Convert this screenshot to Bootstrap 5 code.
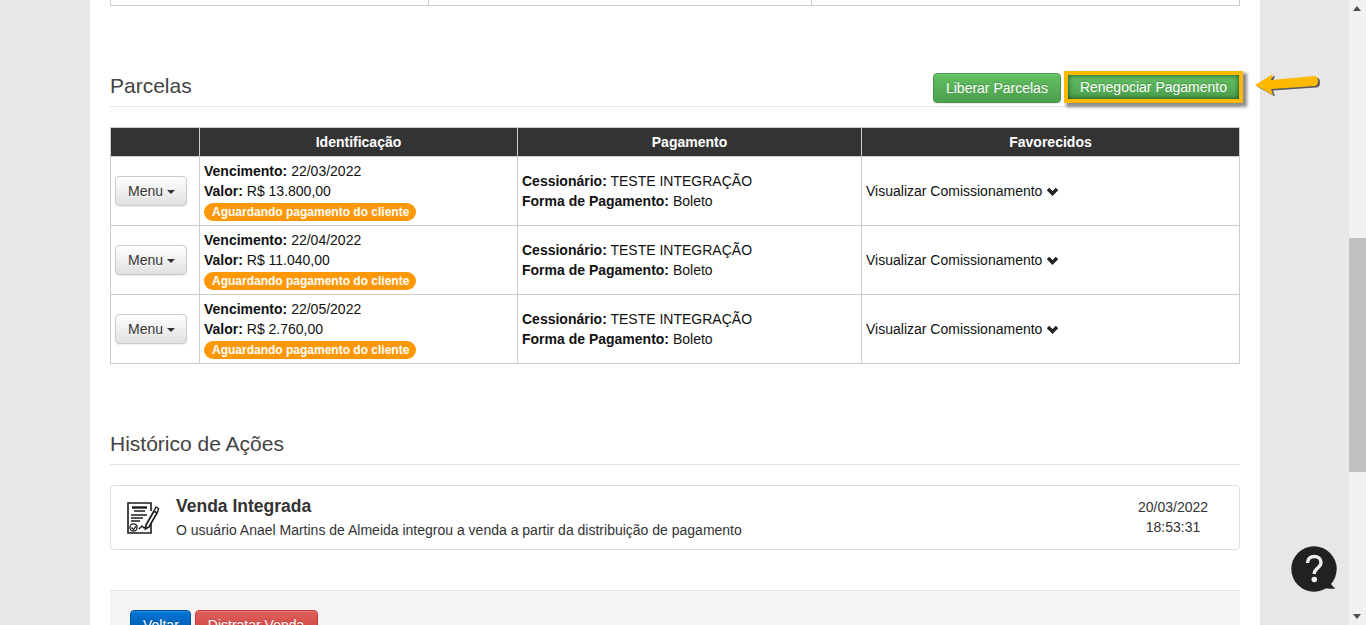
<!DOCTYPE html>
<html lang="pt-BR">
<head>
<meta charset="utf-8">
<title>Venda</title>
<link href="https://cdn.jsdelivr.net/npm/bootstrap@5.3.0/dist/css/bootstrap.min.css" rel="stylesheet">
<style>
html,body{height:625px;overflow:hidden}
body{background:#e8e6e7;font-family:"Liberation Sans",Arial,sans-serif;font-size:14px;color:#333;line-height:20px}
.sheet{width:1170px;margin-left:90px;background:#fff;padding:0 20px;height:625px;overflow:hidden}
.stub{height:6px;display:grid;grid-template-columns:317px 383px 428px;border:1px solid #ccc;border-top:0;width:1130px}
.stub div+div{border-left:1px solid #ccc}
.sect-head{border-bottom:1px solid #e5e5e5;display:flex;justify-content:space-between;align-items:flex-end}
.sect-title{font-size:21px;line-height:22px;font-weight:400;color:#444;margin:0}
.h1{margin-top:61px;height:40px;padding-bottom:3px}
.h1 .sect-title{margin-bottom:6px}
.h2{margin-top:68px;height:33px;padding-bottom:9px}
.acts{display:flex;gap:7px;align-items:flex-end;margin-right:1px}
.tbtn{font-size:14px;line-height:20px;padding:4px 12px;border-radius:4px;color:#fff;text-shadow:0 -1px 0 rgba(0,0,0,.2);box-shadow:inset 0 1px 0 rgba(255,255,255,.15),0 1px 1px rgba(0,0,0,.075);--bs-btn-hover-color:#fff;--bs-btn-active-color:#fff}
.tgreen{background:linear-gradient(#63c063,#4c9f4c);border:1px solid #46964a}
.tblue{background:linear-gradient(#0275d8,#01549b);border:1px solid #01549b;padding-right:11px}
.tred{background:linear-gradient(#e0605c,#cc3d39);border:1px solid #c43a36;padding-right:13px}
.tgrey{background:linear-gradient(#fff,#e0e0e0);border:1px solid #ccc;color:#333;text-shadow:0 1px 0 #fff;padding-right:11px;--bs-btn-hover-color:#333;--bs-btn-active-color:#333}
.hilite{border:0;border-radius:0;height:24px;padding:2px 12px;margin-bottom:4px;outline:4px solid #fdb900;outline-offset:0;box-shadow:inset 0 0 5px #17431a,3px 3px 3px 5px rgba(0,0,0,.45)}
.caret-down{display:inline-block;border-top:4px solid #333;border-left:4px solid transparent;border-right:4px solid transparent;vertical-align:middle}
.parc{width:1129px;margin:20px 0 0;table-layout:fixed;border-collapse:collapse;color:#111}
.parc th{background:#333;color:#fff;text-align:center;font-weight:700;height:29px;padding:0 4px;border:1px solid #ccc;line-height:20px}
.parc td{height:69px;padding:4px;border:1px solid #ccc;vertical-align:middle;line-height:20px}
.parc td.idc{vertical-align:top}
.st{display:block;width:fit-content;background:#ff9806;color:#fff;font-size:12px;font-weight:700;line-height:18px;padding:0 7px 0 8px;border-radius:9px;margin-top:2px}
.chev{vertical-align:0}
.hist{height:65px;margin-top:20px;border:1px solid #ddd;border-radius:4px;display:flex;align-items:center;padding:0 15px}
.hist svg{flex:none}
.hist-body{margin-left:16px;flex:1;margin-top:-1px}
.hist-title{font-size:17.5px;line-height:22px;font-weight:700;color:#333;margin:0 0 3px}
.hist-date{width:100px;text-align:center;margin-right:1px;line-height:20px;margin-top:-1px}
.foot{margin-top:40px;height:80px;background:#f5f5f5;border-top:1px solid #e5e5e5;padding:19px 20px;display:flex;gap:4px;align-items:flex-start}
.arrow{position:fixed;left:1253px;top:71px}
.help{position:fixed;left:1290px;top:545px}
.fakebar{position:fixed;right:0;top:0;width:17px;height:625px;background:#f1f1f1}
.fakebar i{position:absolute;left:0;right:0;top:238px;height:234px;background:#c1c1c1}
.fakebar b{position:absolute;left:4px;width:0;height:0;border-left:4px solid transparent;border-right:4px solid transparent}
.fakebar .up{top:6px;border-bottom:5px solid #505050}
.fakebar .dn{bottom:6px;border-top:5px solid #505050}
</style>
</head>
<body>
<div class="sheet">
  <div class="stub"><div></div><div></div><div></div></div>

  <div class="sect-head h1">
    <h3 class="sect-title">Parcelas</h3>
    <div class="acts">
      <button class="btn tbtn tgreen" type="button">Liberar Parcelas</button>
      <button class="btn tbtn tgreen hilite" type="button">Renegociar Pagamento</button>
    </div>
  </div>

  <table class="parc">
    <colgroup><col style="width:89px"><col style="width:318px"><col style="width:344px"><col style="width:378px"></colgroup>
    <thead><tr><th></th><th>Identificação</th><th>Pagamento</th><th>Favorecidos</th></tr></thead>
    <tbody>
      <tr>
        <td><button class="btn tbtn tgrey" type="button">Menu <span class="caret-down"></span></button></td>
        <td class="idc"><b>Vencimento:</b> 22/03/2022<br><b>Valor:</b> R$ 13.800,00<span class="st">Aguardando pagamento do cliente</span></td>
        <td><b>Cessionário:</b> TESTE INTEGRAÇÃO<br><b>Forma de Pagamento:</b> Boleto</td>
        <td>Visualizar Comissionamento <svg class="chev" width="13" height="9" viewBox="0 0 13 9"><path d="M2 2 L6.500 6.500 L11 2" fill="none" stroke="#222" stroke-width="3.400"/></svg></td>
      </tr>
      <tr>
        <td><button class="btn tbtn tgrey" type="button">Menu <span class="caret-down"></span></button></td>
        <td class="idc"><b>Vencimento:</b> 22/04/2022<br><b>Valor:</b> R$ 11.040,00<span class="st">Aguardando pagamento do cliente</span></td>
        <td><b>Cessionário:</b> TESTE INTEGRAÇÃO<br><b>Forma de Pagamento:</b> Boleto</td>
        <td>Visualizar Comissionamento <svg class="chev" width="13" height="9" viewBox="0 0 13 9"><path d="M2 2 L6.500 6.500 L11 2" fill="none" stroke="#222" stroke-width="3.400"/></svg></td>
      </tr>
      <tr>
        <td><button class="btn tbtn tgrey" type="button">Menu <span class="caret-down"></span></button></td>
        <td class="idc"><b>Vencimento:</b> 22/05/2022<br><b>Valor:</b> R$ 2.760,00<span class="st">Aguardando pagamento do cliente</span></td>
        <td><b>Cessionário:</b> TESTE INTEGRAÇÃO<br><b>Forma de Pagamento:</b> Boleto</td>
        <td>Visualizar Comissionamento <svg class="chev" width="13" height="9" viewBox="0 0 13 9"><path d="M2 2 L6.500 6.500 L11 2" fill="none" stroke="#222" stroke-width="3.400"/></svg></td>
      </tr>
    </tbody>
  </table>

  <div class="sect-head h2"><h3 class="sect-title">Histórico de Ações</h3></div>

  <div class="hist">
    <svg width="34" height="34" viewBox="0 0 34 34" fill="none" stroke="#1c1c1c">
      <path d="M25 10V2H2v30h23v-9" stroke-width="1.600"/>
      <path d="M6 6.500h15" stroke-width="2.400"/>
      <path d="M8 10h11M5 14h16M5 17h12M5 20h9" stroke-width="1.400"/>
      <circle cx="7.500" cy="26.500" r="3.600" stroke-width="1.300"/>
      <path d="M5.500 26.500l2 2 3.500-4.500" stroke-width="1.200"/>
      <path d="M13 28l3-3 2 2 2-1" stroke-width="1.400"/>
      <path d="M20 24l8-14 3 2-8 14-3.500 2z" stroke-width="1.700"/>
      <path d="M28.500 9l1.500-3 2.500 1.500-1 4" stroke-width="1.400"/>
    </svg>
    <div class="hist-body">
      <h4 class="hist-title">Venda Integrada</h4>
      <div>O usuário Anael Martins de Almeida integrou a venda a partir da distribuição de pagamento</div>
    </div>
    <div class="hist-date">20/03/2022<br>18:53:31</div>
  </div>

  <div class="foot">
    <button class="btn tbtn tblue" type="button">Voltar</button>
    <button class="btn tbtn tred" type="button">Distratar Venda</button>
  </div>
</div>

<svg class="arrow" width="72" height="30" viewBox="0 0 72 30">
  <path d="M2 14 L20 3 L18 9 L61 5 Q65 5 65 10 Q65 15 61 15 L18 18 L20 24 Z" fill="#000" opacity=".6" transform="translate(2 1.500)"/>
  <path d="M2 14 L20 3 L18 9 L61 5 Q65 5 65 10 Q65 15 61 15 L18 18 L20 24 Z" fill="#fdb900"/>
</svg>

<svg class="help" width="48" height="50" viewBox="0 0 48 50">
  <circle cx="24" cy="24" r="22.700" fill="#212121"/>
  <path d="M30 42 Q36 44.500 45.500 43.500 Q41 41 40 36 Z" fill="#212121"/>
  <path d="M17.500 18c0-4.500 3-6.500 6.800-6.500s6.700 2.200 6.700 6c0 5.500-6.800 5.500-6.800 11.500" fill="none" stroke="#eee" stroke-width="3.400"/>
  <circle cx="24.300" cy="34.500" r="2.800" fill="#eee"/>
</svg>

<div class="fakebar"><b class="up"></b><i></i><b class="dn"></b></div>
</body>
</html>
